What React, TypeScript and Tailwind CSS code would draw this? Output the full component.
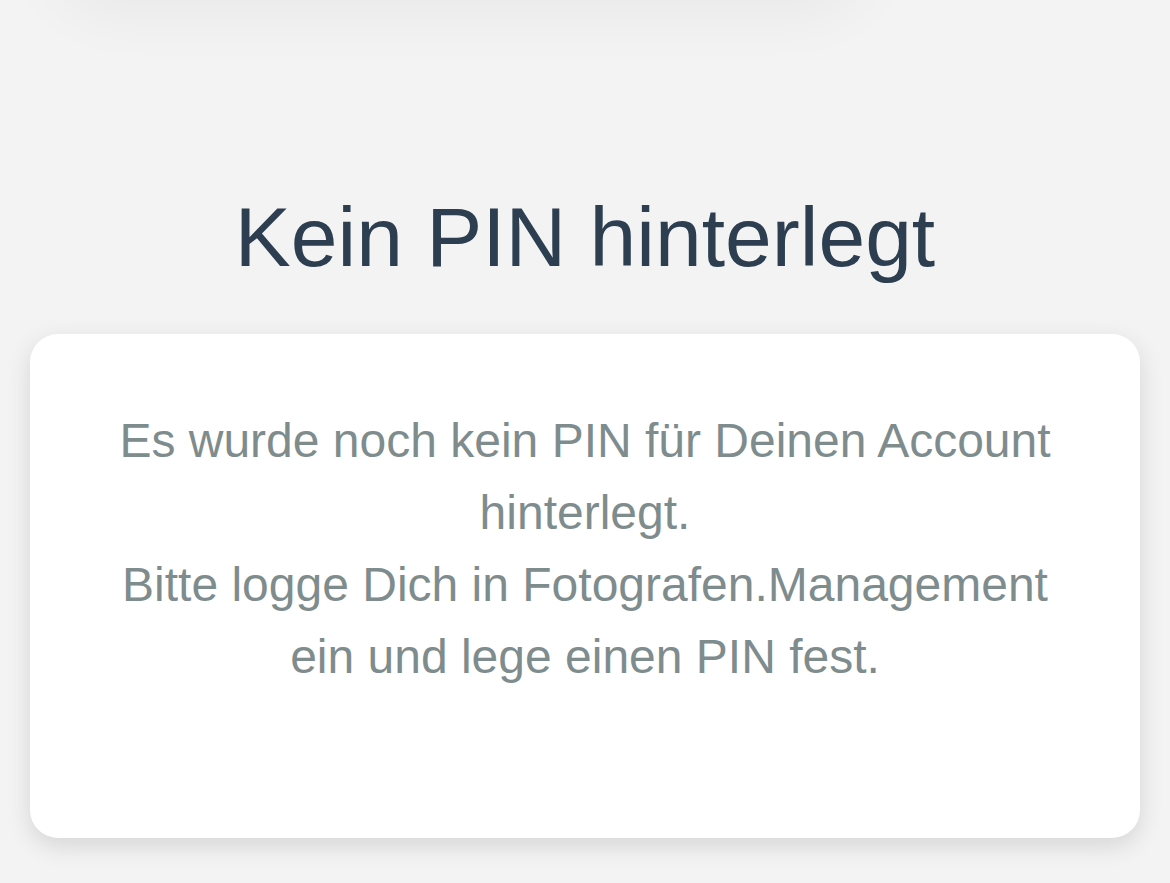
import React from 'react';

const App: React.FC = () => {
  return (
    <div className="relative min-h-[883px] w-full overflow-hidden bg-[#f3f3f3] font-['Liberation_Sans',Arial,sans-serif]">
      {/* shadow of the header that sits above the viewport */}
      <div className="absolute -top-[90px] left-[40px] h-[90px] w-[840px] rounded-b-[80px] bg-[#f3f3f3] shadow-[0_16px_60px_rgba(0,0,0,0.045)]" />

      <div className="flex flex-col items-center px-[30px] pt-[189px]">
        <h1 className="text-[84px] font-normal leading-[96px] text-[#2c3e50]">Kein PIN hinterlegt</h1>

        <div className="mt-[49px] w-full rounded-[28px] bg-white px-[70px] pt-[71px] pb-[145px] shadow-[0_8px_24px_rgba(0,0,0,0.12)]">
          <p className="text-center text-[48px] leading-[72px] text-[#7f8c8d]">
            Es wurde noch kein PIN für Deinen Account hinterlegt.
            <br />
            Bitte logge Dich in Fotografen.Management ein und lege einen PIN fest.
          </p>
        </div>
      </div>
    </div>
  );
};

export default App;
